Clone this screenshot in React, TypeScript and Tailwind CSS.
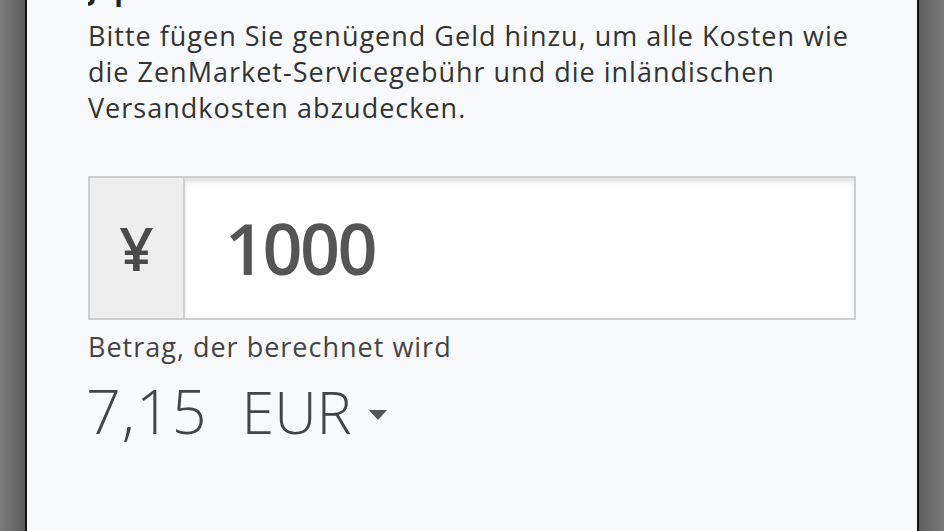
import React from "react";

export default function App() {
  return (
    <div
      className="flex h-[531px] w-full overflow-hidden"
      style={{ fontFamily: '"Open Sans", "Noto Sans", sans-serif' }}
    >
      <div className="w-[25px] shrink-0 bg-gradient-to-r from-[#7c7c7c] to-[#5c5c5c]" />
      <div className="w-[2px] shrink-0 bg-[#111]" />
      <div className="flex-1 bg-[#f8f9fb] pl-[61px] pr-[61px]">
        <div className="h-[18px] overflow-hidden">
          <h2 className="-mt-[29px] text-[28px] font-bold leading-[36px] text-[#222]">
            Japanischer Yen
          </h2>
        </div>
        <p className="text-[27px] leading-[36px] tracking-[1px] text-[#333]">
          Bitte fügen Sie genügend Geld hinzu, um alle Kosten wie die ZenMarket-Servicegebühr und die inländischen Versandkosten abzudecken.
        </p>
        <div className="mt-[50px] flex h-[144px] w-[768px] border-2 border-[#cfcfcf] bg-white">
          <div className="flex w-[95px] shrink-0 items-center justify-center border-r-2 border-[#cfcfcf] bg-[#eeeeee] text-[60px] font-semibold text-[#4a4a4a]">
            ¥
          </div>
          <div className="flex flex-1 items-center pl-[40px] text-[70px] font-semibold tracking-[-2.5px] text-[#555] shadow-[inset_0_4px_4px_rgba(0,0,0,0.12)]">
            1000
          </div>
        </div>
        <div className="mt-[9px] text-[27px] leading-[36px] tracking-[1px] text-[#444]">
          Betrag, der berechnet wird
        </div>
        <div className="mt-[15px] flex items-center text-[61px] font-light leading-[62px] text-[#444]">
          <span className="-ml-[2px] tracking-[1px]">7,15</span>
          <span className="ml-[34px] text-[59px]">EUR</span>
          <svg className="ml-[17px] mt-[8px]" width="18" height="10" viewBox="0 0 18 10">
            <path d="M0 0 L18 0 L9 10 Z" fill="#555" />
          </svg>
        </div>
      </div>
      <div className="w-[2px] shrink-0 bg-[#111]" />
      <div className="w-[25px] shrink-0 bg-gradient-to-r from-[#5e5e5e] to-[#7a7a7a]" />
    </div>
  );
}
